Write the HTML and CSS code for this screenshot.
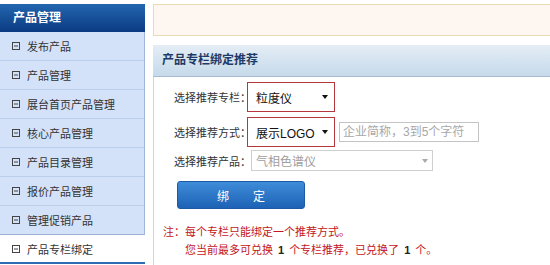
FILE: index.html
```html
<!DOCTYPE html>
<html lang="zh-CN">
<head>
    <meta charset="UTF-8">
    <title>产品专栏绑定</title>
    <link rel="stylesheet" href="styles.css">
</head>
<body>
    <div class="page">
        <aside class="sidebar">
            <div class="side-head">产品管理</div>
            <ul class="side-menu">
                <li><svg class="ico" viewBox="0 0 8 8"><rect x="0.5" y="0.5" width="7" height="7"/><line x1="2" y1="4" x2="6" y2="4"/></svg>发布产品</li>
                <li><svg class="ico" viewBox="0 0 8 8"><rect x="0.5" y="0.5" width="7" height="7"/><line x1="2" y1="4" x2="6" y2="4"/></svg>产品管理</li>
                <li><svg class="ico" viewBox="0 0 8 8"><rect x="0.5" y="0.5" width="7" height="7"/><line x1="2" y1="4" x2="6" y2="4"/></svg>展台首页产品管理</li>
                <li><svg class="ico" viewBox="0 0 8 8"><rect x="0.5" y="0.5" width="7" height="7"/><line x1="2" y1="4" x2="6" y2="4"/></svg>核心产品管理</li>
                <li><svg class="ico" viewBox="0 0 8 8"><rect x="0.5" y="0.5" width="7" height="7"/><line x1="2" y1="4" x2="6" y2="4"/></svg>产品目录管理</li>
                <li><svg class="ico" viewBox="0 0 8 8"><rect x="0.5" y="0.5" width="7" height="7"/><line x1="2" y1="4" x2="6" y2="4"/></svg>报价产品管理</li>
                <li><svg class="ico" viewBox="0 0 8 8"><rect x="0.5" y="0.5" width="7" height="7"/><line x1="2" y1="4" x2="6" y2="4"/></svg>管理促销产品</li>
            </ul>
            <div class="side-active"><svg class="ico" viewBox="0 0 8 8"><rect x="0.5" y="0.5" width="7" height="7"/><line x1="2" y1="4" x2="6" y2="4"/></svg>产品专栏绑定</div>
        </aside>

        <main class="main">
            <div class="notice"></div>

            <section class="panel">
                <h3 class="panel-title">产品专栏绑定推荐</h3>
                <div class="panel-body">
                    <form class="form">
                        <div class="row row-column">
                            <label class="label">选择推荐专栏：</label>
                            <div class="pick"><span>粒度仪</span><i class="arrow"></i></div>
                        </div>
                        <div class="row row-mode">
                            <label class="label">选择推荐方式：</label>
                            <div class="pick"><span>展示LOGO</span><i class="arrow"></i></div>
                            <input class="short-name" type="text" placeholder="企业简称，3到5个字符">
                        </div>
                        <div class="row row-product">
                            <label class="label">选择推荐产品：</label>
                            <div class="select-off"><span>气相色谱仪</span><i class="arrow arrow-off"></i></div>
                        </div>
                        <button type="button" class="bind-btn">绑　　定</button>
                    </form>

                    <p class="note">注：每个专栏只能绑定一个推荐方式。</p>
                    <p class="note note-indent">您当前最多可兑换<b>1</b>个专栏推荐，已兑换了<b>1</b>个。</p>
                </div>
            </section>
        </main>
    </div>
</body>
</html>
```

FILE: styles.css
```css
body {
    margin: 0;
    font-family: "Liberation Sans", "Noto Sans CJK SC", sans-serif;
    font-size: 11px;
    color: #333;
    background-color: #fff;
    overflow: hidden;
}

.page {
    display: flex;
    padding-top: 4px;
}

/* left menu */
.sidebar {
    width: 145px;
    flex-shrink: 0;
}

.side-head {
    height: 28px;
    line-height: 28px;
    padding-left: 13px;
    color: #fff;
    font-size: 12px;
    font-weight: bold;
    background: linear-gradient(#2366b0, #0b3b82);
}

.side-menu {
    list-style: none;
    margin: 0;
    padding: 0;
    background-color: #d3e2f8;
    border-right: 1px solid #9fb7da;
    border-bottom: 1px solid #9ab1d3;
}

.side-menu li {
    display: flex;
    align-items: center;
    height: 28px;
    padding-left: 12px;
    border-bottom: 1px solid #bccfea;
}

.side-menu li:last-child {
    border-bottom: none;
}

.side-active {
    display: flex;
    align-items: center;
    height: 27px;
    padding-left: 12px;
    background-color: #fff;
    border-bottom: 2px solid #2e6cb4;
}

.ico {
    width: 8px;
    height: 8px;
    margin-right: 7px;
    fill: none;
    stroke: #444;
    stroke-width: 1;
}

/* right content */
.main {
    flex: 1;
    margin-left: 8px;
}

.notice {
    height: 30px;
    background-color: #fef6f1;
    border: 1px solid #ecdcb2;
    border-right: none;
}

.panel {
    margin-top: 9px;
}

.panel-title {
    margin: 0;
    height: 31px;
    line-height: 31px;
    padding-left: 9px;
    font-size: 12px;
    font-weight: bold;
    color: #1d3a66;
    background: linear-gradient(#e4edf5, #c5daeb);
    border-bottom: 1px solid #a8bccf;
}

.panel-body {
    height: 185px;
    padding: 3px 0 0 9px;
    border-left: 1px solid #cfd7df;
}

.form {
    padding-left: 11px;
}

.row {
    display: flex;
    align-items: center;
}

.row-column {
    margin-top: 2px;
}

.row-mode {
    margin-top: 5px;
}

.row-product {
    margin-top: 3px;
}

.label {
    width: 73px;
    color: #333;
    white-space: nowrap;
}

.pick {
    display: flex;
    align-items: center;
    justify-content: space-between;
    box-sizing: border-box;
    width: 88px;
    height: 30px;
    padding: 0 6px 0 8px;
    border: 1px solid #b3373d;
    font-size: 12px;
    color: #111;
}

.arrow {
    width: 0;
    height: 0;
    border-left: 3.5px solid transparent;
    border-right: 3.5px solid transparent;
    border-top: 4px solid #111;
}

.arrow-off {
    border-top-color: #aaa;
}

.short-name {
    box-sizing: border-box;
    width: 140px;
    height: 20px;
    margin-left: 4px;
    padding: 0 3px;
    border: 1px solid #c4c4c4;
    font-family: inherit;
    font-size: 12px;
}

.short-name::placeholder {
    color: #a8a8a8;
}

.select-off {
    display: flex;
    align-items: center;
    justify-content: space-between;
    box-sizing: border-box;
    width: 182px;
    height: 21px;
    margin-left: 4px;
    padding: 0 4px 0 4px;
    border: 1px solid #cfcfcf;
    font-size: 12px;
    color: #9e9e9e;
}

.bind-btn {
    display: block;
    width: 128px;
    height: 28px;
    margin: 10px 0 0 3px;
    border: 1px solid #1c5aa6;
    border-radius: 3px;
    background: linear-gradient(#3f8cd9, #1d62b5);
    color: #fff;
    font-family: inherit;
    font-size: 12px;
    cursor: pointer;
}

.note {
    margin: 0;
    height: 18px;
    line-height: 18px;
    color: #c4161c;
}

.form + .note {
    margin-top: 14px;
}

.note-indent {
    padding-left: 22px;
}

.note b {
    margin: 0 5px;
    color: #222;
}
```
